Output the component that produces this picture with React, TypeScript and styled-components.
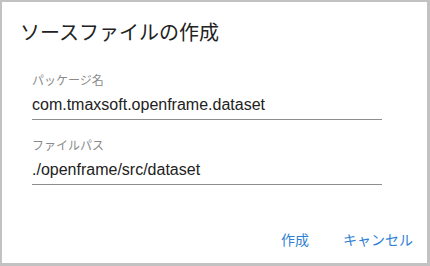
import styled, { createGlobalStyle } from "styled-components";

const GlobalStyle = createGlobalStyle`
    html, body {
        margin: 0;
        padding: 0;
        background: #ffffff;
    }
    * {
        box-sizing: border-box;
    }
`;

const Dialog = styled.div`
    width: 430px;
    height: 266px;
    display: flex;
    flex-direction: column;
    background: #ffffff;
    border-style: solid;
    border-color: #c2c2c2;
    border-width: 2px 3px 3px 2px;
    font-family: "Liberation Sans", "Noto Sans CJK JP", sans-serif;
`;

const Title = styled.h2`
    margin: 18px 0 0 18px;
    font-family: "Noto Sans CJK JP", sans-serif;
    font-weight: 400;
    font-size: 20px;
    line-height: 24px;
    color: #222222;
`;

const Form = styled.div`
    display: flex;
    flex-direction: column;
    gap: 17px;
    margin: 28px 0 0 30px;
    width: 350px;
`;

const Field = styled.label`
    display: flex;
    flex-direction: column;
`;

const Label = styled.span`
    font-family: "Noto Sans CJK JP", sans-serif;
    font-size: 12px;
    line-height: 16px;
    color: #8a8a8a;
`;

const Value = styled.div`
    margin-top: 7px;
    padding-bottom: 4px;
    font-size: 16px;
    line-height: 20px;
    color: #222222;
    border-bottom: 1px solid #8e8e8e;
`;

const Actions = styled.div`
    margin-top: auto;
    display: flex;
    justify-content: flex-end;
    gap: 18px;
    padding: 0 6px 8px 0;
`;

const TextButton = styled.button`
    border: none;
    background: none;
    padding: 6px 8px;
    font-family: "Noto Sans CJK JP", sans-serif;
    font-size: 14px;
    line-height: 20px;
    color: #2f7fd3;
    cursor: pointer;
`;

const fields = [
    { label: "パッケージ名", value: "com.tmaxsoft.openframe.dataset" },
    { label: "ファイルパス", value: "./openframe/src/dataset" },
];

export default function App() {
    return (
        <>
            <GlobalStyle />
            <Dialog>
                <Title>ソースファイルの作成</Title>
                <Form>
                    {fields.map((f) => (
                        <Field key={f.label}>
                            <Label>{f.label}</Label>
                            <Value>{f.value}</Value>
                        </Field>
                    ))}
                </Form>
                <Actions>
                    <TextButton>作成</TextButton>
                    <TextButton>キャンセル</TextButton>
                </Actions>
            </Dialog>
        </>
    );
}
